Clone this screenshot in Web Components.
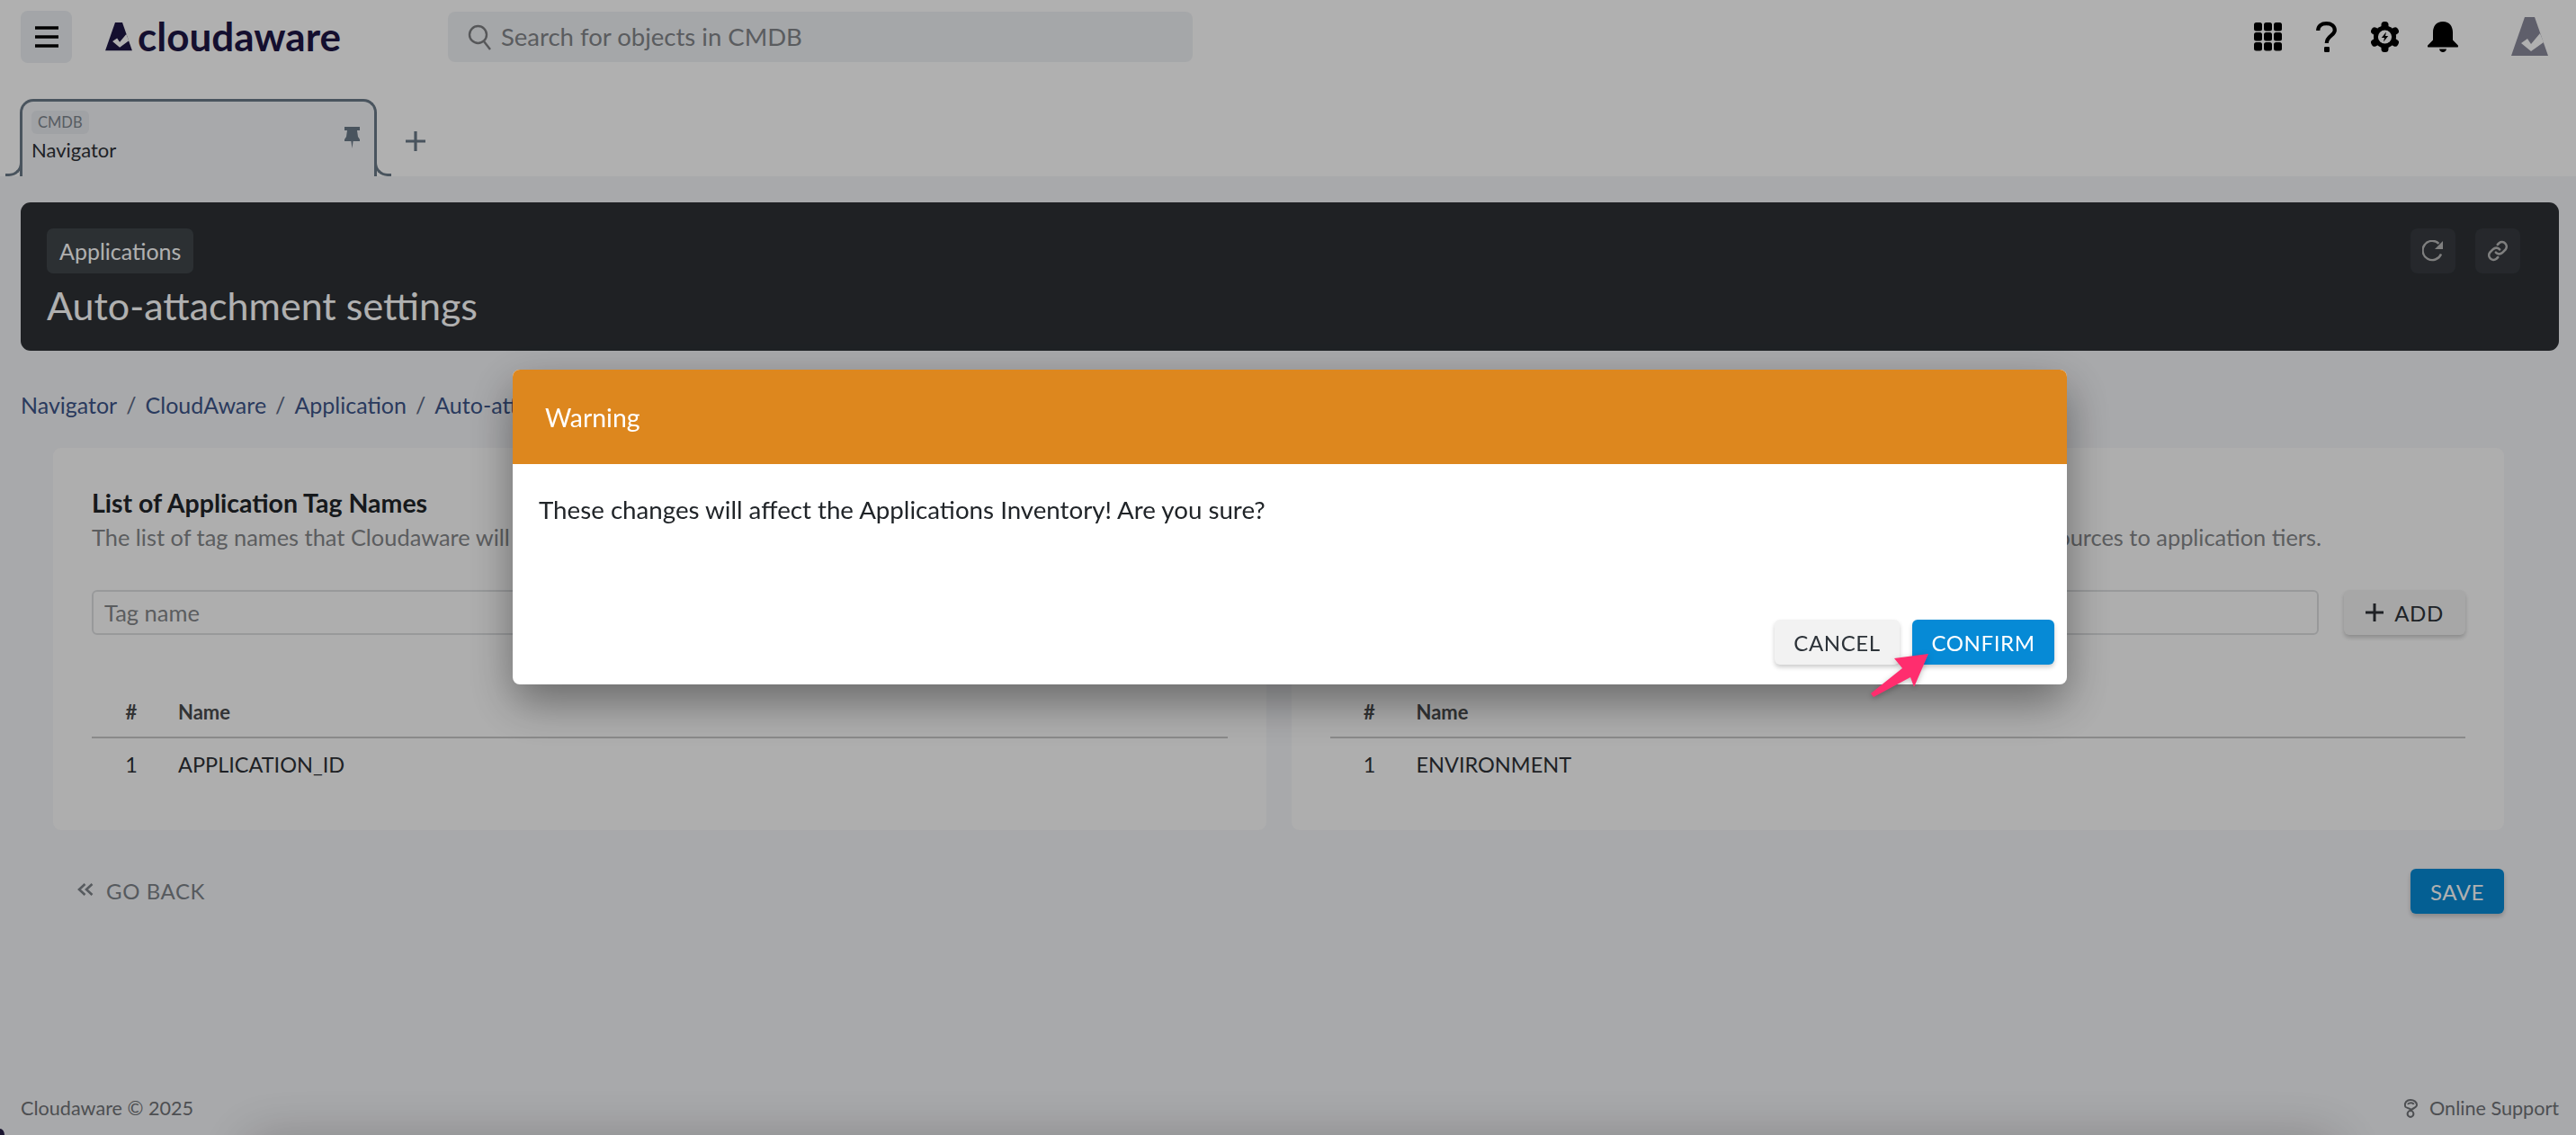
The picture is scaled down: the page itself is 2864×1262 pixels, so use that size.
<!DOCTYPE html>
<html lang="en">
<head>
<meta charset="utf-8">
<title>Cloudaware - Auto-attachment settings</title>
<style>
    html, body { margin: 0; height: 100%; overflow: hidden; }
    body { background: #f4f5f8; color: #212529; font-family: Lato, "Open Sans", sans-serif; font-size: 25px; }
    cw-app { height: 100vh; }
</style>
</head>
<body>

<template id="cw-logo-mark">
    <style>
        :host { display: inline-flex; }
        svg { display: block; width: 100%; height: 100%; }
    </style>
    <svg viewBox="0 0 41 44">
        <path fill="currentColor" d="M15 0H26L41 43H0Z"/>
        <path fill="var(--notch, #fff)" d="M11 29L18 24L22 30L32 18L36 28L22 38Z"/>
    </svg>
</template>

<template id="cw-topbar">
    <style>
        :host { display: flex; align-items: center; height: 58px; padding: 12px 31px 12px 23px; background: #fff; }
        .menu { width: 57px; height: 58px; border-radius: 8px; background: #ecEFf3; display: flex; align-items: center; justify-content: center; }
        .menu svg { width: 26px; height: 24px; }
        .brand { display: flex; align-items: center; gap: 6px; margin-left: 37px; width: 381px; color: #1d1744; }
        .brand cw-logo-mark { width: 30px; height: 32px; }
        .brand span { font-weight: 700; font-size: 44px; line-height: 56px; margin-bottom: 2px; }
        .search { width: 828px; height: 56px; border-radius: 8px; background: #f0f2f5; display: flex; align-items: center; box-sizing: border-box; padding-left: 22px; gap: 11px; color: #83868a; font-size: 27.5px; }
        .search svg { width: 26px; height: 30px; flex: none; }
        .search span { margin-bottom: 2px; }
        .icons { margin-left: auto; display: flex; align-items: center; color: #000; }
        .icons svg { display: block; }
        .avatar { width: 41px; height: 44px; margin-left: 59px; color: #8a8a9b; --notch: #fff; }
    </style>
    <div class="menu">
        <svg viewBox="0 0 26 24"><path d="M0 2H26M0 12H26M0 22H26" stroke="#000" stroke-width="3.6" fill="none"/></svg>
    </div>
    <div class="brand"><cw-logo-mark></cw-logo-mark><span>cloudaware</span></div>
    <div class="search">
        <svg viewBox="0 0 26 30" fill="none" stroke="#7d7f82" stroke-width="2.4"><circle cx="11.5" cy="12.5" r="9.5"/><path d="M18 20L25 29"/></svg>
        <span>Search for objects in CMDB</span>
    </div>
    <div class="icons">
        <svg width="31" height="32" viewBox="0 0 31 32" fill="currentColor" style="margin-right:38px">
            <rect x="0" y="0" width="9" height="9.5" rx="2.5"/><rect x="11" y="0" width="9" height="9.5" rx="2.5"/><rect x="22" y="0" width="9" height="9.5" rx="2.5"/>
            <rect x="0" y="11" width="9" height="9.5" rx="2.5"/><rect x="11" y="11" width="9" height="9.5" rx="2.5"/><rect x="22" y="11" width="9" height="9.5" rx="2.5"/>
            <rect x="0" y="22" width="9" height="9.5" rx="2.5"/><rect x="11" y="22" width="9" height="9.5" rx="2.5"/><rect x="22" y="22" width="9" height="9.5" rx="2.5"/>
        </svg>
        <svg width="23" height="34" viewBox="0 0 23 34" style="margin-right:38px">
            <path d="M2.2 10C2.2 5 6 2.2 11.5 2.2C17 2.2 20.8 5 20.8 9.8C20.8 15.5 11.8 15.5 11.8 24" fill="none" stroke="currentColor" stroke-width="4.2"/>
            <rect x="9" y="28" width="6" height="6" rx="1.2" fill="currentColor"/>
        </svg>
        <svg width="31" height="34" viewBox="0 0 31 34" style="margin-right:32px">
            <g fill="currentColor">
                <circle cx="15.5" cy="17" r="12.5"/>
                <rect x="11.5" y="0" width="8" height="34" rx="3.5"/>
                <rect x="11.5" y="0" width="8" height="34" rx="3.5" transform="rotate(60 15.5 17)"/>
                <rect x="11.5" y="0" width="8" height="34" rx="3.5" transform="rotate(120 15.5 17)"/>
            </g>
            <circle cx="15.5" cy="17" r="7.6" fill="#fff"/>
            <path d="M17 11.5L11.8 18H15L14 22.5L19.2 16H16Z" fill="currentColor"/>
        </svg>
        <svg width="34" height="34" viewBox="0 0 34 34" fill="currentColor">
            <path d="M17 0C9.5 0 6 5.5 6 12V20.5L1.6 25C.4 26.2 0 26.6 0 27.4C0 28.2.6 28.6 1.6 28.6H32.4C33.4 28.6 34 28.2 34 27.4C34 26.6 33.6 26.2 32.4 25L28 20.5V12C28 5.5 24.5 0 17 0Z"/>
            <path d="M13 30.5H21C20.6 32.8 19 34 17 34C15 34 13.4 32.8 13 30.5Z"/>
        </svg>
        <cw-logo-mark class="avatar"></cw-logo-mark>
    </div>
</template>

<template id="cw-tabs">
    <style>
        :host { display: flex; align-items: flex-start; height: 86px; padding: 28px 0 0 22px; background: #fff; }
        .tab { position: relative; box-sizing: border-box; width: 397px; height: 86px; padding: 10px 16px 0 10px; background: #f4f5f8; border: 3px solid #6b7a88; border-bottom: 0; border-radius: 15px 15px 0 0; }
        .tab::before, .tab::after { content: ""; position: absolute; bottom: 0; width: 16px; height: 14px; border-bottom: 3px solid #6b7a88; }
        .tab::before { left: -19px; border-right: 3px solid #6b7a88; border-bottom-right-radius: 15px; }
        .tab::after { right: -19px; border-left: 3px solid #6b7a88; border-bottom-left-radius: 15px; }
        .kind { display: block; width: max-content; padding: 0 7px; height: 26px; line-height: 26px; border-radius: 6px; background: #e8ebef; color: #7e868e; font-size: 16.5px; }
        .name { font-size: 22px; line-height: 28px; margin-top: 4px; color: #2d3136; }
        .pin { position: absolute; right: 16px; top: 28px; width: 17px; height: 24px; }
        .add { width: 22px; height: 22px; margin: 36px 0 0 32px; }
    </style>
    <div class="tab">
        <span class="kind"><slot name="kind"></slot></span>
        <div class="name"><slot></slot></div>
        <svg class="pin" viewBox="0 0 17 24" fill="#6b7a88"><path d="M0 0H17V4H14L15 11L17 14V16H9.6L8.5 24L7.4 16H0V14L2 11L3 4H0Z"/></svg>
    </div>
    <svg class="add" viewBox="0 0 22 22"><path d="M11 0V22M0 11H22" stroke="#6b7a88" stroke-width="3.2"/></svg>
</template>

<template id="cw-page-header">
    <style>
        :host { display: flex; justify-content: space-between; height: 165px; box-sizing: border-box; padding: 29px 43px 0 29px; border-radius: 11px; background: #2d3135; color: #fff; }
        .chip { display: inline-block; height: 50px; line-height: 50px; padding: 0 14px; border-radius: 7px; background: #40464b; font-size: 25px; font-variant-ligatures: common-ligatures discretionary-ligatures; }
        h1 { margin: 7px 0 0; font-size: 43px; line-height: 58px; font-weight: 400; }
        .tools { display: flex; gap: 22px; }
        .tool { width: 50px; height: 50px; border-radius: 8px; background: #373b40; display: flex; align-items: center; justify-content: center; }
        svg { display: block; }
    </style>
    <div>
        <span class="chip"><slot name="section"></slot></span>
        <h1><slot></slot></h1>
    </div>
    <div class="tools">
        <div class="tool">
            <svg width="24" height="24" viewBox="0 0 24 24" fill="none" stroke="#b9b9b9" stroke-width="2.4"><path d="M21 15.5A10.6 10.6 0 1 1 18.5 3.8"/><path d="M23 1V10H14Z" fill="#b9b9b9" stroke="none"/></svg>
        </div>
        <div class="tool">
            <svg width="26" height="26" viewBox="0 0 24 24" fill="none" stroke="#b9b9b9" stroke-width="2.4" stroke-linecap="round"><path d="M10 13.5a4.6 4.6 0 0 0 6.6.4l3.4-3.4a4.7 4.7 0 0 0-6.6-6.6l-1.6 1.6"/><path d="M14 10.5a4.6 4.6 0 0 0-6.6-.4L4 13.5a4.7 4.7 0 0 0 6.6 6.6l1.6-1.6"/></svg>
        </div>
    </div>
</template>

<template id="cw-breadcrumb">
    <style>
        :host { display: flex; gap: 10px; margin-top: 44px; line-height: 32px; font-size: 25px; color: #3d5589; white-space: nowrap; }
        i { font-style: normal; color: #5d6b86; }
        .lig { font-variant-ligatures: common-ligatures discretionary-ligatures; }
    </style>
    <span>Navigator</span><i>/</i><span>CloudAware</span><i>/</i><span class="lig">Application</span><i>/</i><span>Auto-attachment settings</span>
</template>

<template id="cw-tag-card">
    <style>
        :host { display: block; box-sizing: border-box; height: 425px; padding: 44px 43px 0; border-radius: 9px; background: #fdfdfd; }
        h3 { margin: 0; font-size: 28.5px; line-height: 34px; font-weight: 700; color: #212529; }
        p { margin: 6px 0 0; font-size: 25.4px; line-height: 30px; color: #85878a; white-space: nowrap; }
        .form { display: flex; gap: 28px; margin-top: 44px; }
        .field { flex: 1; height: 50px; box-sizing: border-box; padding-left: 12px; line-height: 46px; border: 2px solid #dcdee0; border-radius: 6px; color: #85878a; font-size: 25.5px; }
        cw-button { width: 135px; }
        .head, .row { display: grid; grid-template-columns: 88px 1fr; }
        .head { margin-top: 57px; height: 58px; line-height: 58px; font-size: 22px; font-weight: 700; color: #4a4c4e; border-bottom: 2px solid #c9c9c9; box-sizing: border-box; }
        .row { height: 58px; line-height: 58px; font-size: 23.5px; color: #2d3136; }
        .head span:first-child, .row span:first-child { text-align: center; }
        .head span + span, .row span + span { padding-left: 8px; }
    </style>
    <h3><slot name="title"></slot></h3>
    <p><slot name="hint"></slot></p>
    <div class="form">
        <div class="field">Tag name</div>
        <cw-button><svg slot="icon" width="20" height="20" viewBox="0 0 20 20"><path d="M10 0V20M0 10H20" stroke="#2d3136" stroke-width="3"/></svg>ADD</cw-button>
    </div>
    <div class="head"><span>#</span><span>Name</span></div>
    <div class="row"><span>1</span><span><slot name="tag"></slot></span></div>
</template>

<template id="cw-button">
    <style>
        :host { display: inline-flex; box-sizing: border-box; height: 50px; align-items: center; justify-content: center; gap: 12px; border-radius: 6px; background: #f2f2f2; color: #2d3339; font-size: 24px; letter-spacing: .6px; box-shadow: 0 3px 5px rgba(0,0,0,.2); }
        :host([primary]) { background: #068ad6; color: #fff; }
        :host([flat]) { background: none; box-shadow: none; color: #7d8389; gap: 14px; }
        ::slotted(svg) { display: block; flex: none; }
    </style>
    <slot name="icon"></slot><slot></slot>
</template>

<template id="cw-footer">
    <style>
        :host { display: flex; justify-content: space-between; align-items: center; margin-top: auto; padding: 0 19px 14px 23px; line-height: 32px; font-size: 21.6px; color: #707377; }
        .help { display: flex; align-items: center; gap: 13px; }
        svg { display: block; }
    </style>
    <span>Cloudaware © 2025</span>
    <span class="help">
        <svg width="16" height="21" viewBox="0 0 16 21" fill="none" stroke="currentColor" stroke-width="2"><path d="M2 8C1 4 4 1 8 1C12 1 15 3.5 15 6.5C15 9.5 11 10 9 12C6 9.5 2 10 2 8Z"/><path d="M5 6C6 3.5 11 3.5 11.5 6"/><circle cx="8" cy="16.5" r="3.4"/></svg>
        <span>Online Support</span>
    </span>
</template>

<template id="cw-dialog">
    <style>
        :host { position: fixed; inset: 0; display: block; background: rgba(0,0,0,.31); }
        .box { position: relative; display: flex; flex-direction: column; width: 1728px; height: 350px; margin: 411px 0 0 570px; border-radius: 8px; background: #fff; box-shadow: 0 20px 50px rgba(0,0,0,.4); }
        header { height: 105px; display: flex; align-items: center; padding-left: 36px; background: #dd871e; color: #fff; font-size: 28.4px; border-radius: 8px 8px 0 0; }
        .body { flex: 1; padding: 31px 29px 0; font-size: 27.7px; line-height: 40px; color: #212529; }
        footer { display: flex; justify-content: flex-end; gap: 14px; padding: 0 14px 22px; }
        .pointer { position: absolute; left: 1509px; top: 314px; width: 70px; height: 54px; overflow: visible; filter: drop-shadow(0 2px 3px rgba(0,0,0,.25)); }
        .ghost { position: fixed; left: 300px; right: 290px; top: 1290px; height: 100px; box-shadow: 0 0 60px 25px rgba(0,0,0,.22); }
        .corner { position: fixed; left: 0; bottom: 0; width: 5px; height: 7px; background: #1a1530; border-top-right-radius: 100%; }
        cw-button.cancel { width: 139px; }
        cw-button.confirm { width: 158px; }
    </style>
    <div class="box">
        <header><slot name="title"></slot></header>
        <div class="body"><slot></slot></div>
        <footer>
            <cw-button class="cancel">CANCEL</cw-button>
            <cw-button class="confirm" primary>CONFIRM</cw-button>
        </footer>
        <svg class="pointer" viewBox="0 0 70 54"><path fill="#ff2d6e" d="M65 2L27 7L36 18L1 46L4 50L45 28L49 39Z"/></svg>
    </div>
    <div class="ghost"></div>
    <div class="corner"></div>
</template>

<template id="cw-app">
    <style>
        :host { display: flex; flex-direction: column; }
        .page { padding: 29px 19px 0 23px; }
        .cards { display: grid; grid-template-columns: 1fr 1fr; gap: 28px; margin: 32px 61px 0 36px; }
        .actions { display: flex; justify-content: space-between; align-items: center; margin: 43px 61px 0 63px; }
        cw-button[primary] { width: 104px; }
        cw-button[flat] { margin-top: -2px; }
    </style>
    <cw-topbar></cw-topbar>
    <cw-tabs><span slot="kind">CMDB</span>Navigator</cw-tabs>
    <div class="page">
        <cw-page-header><span slot="section">Applications</span>Auto-attachment settings</cw-page-header>
        <cw-breadcrumb></cw-breadcrumb>
        <div class="cards">
            <cw-tag-card>
                <span slot="title">List of Application Tag Names</span>
                <span slot="hint">The list of tag names that Cloudaware will use to attach resources to applications.</span>
                <span slot="tag">APPLICATION_ID</span>
            </cw-tag-card>
            <cw-tag-card>
                <span slot="title">List of Environment Tag Names</span>
                <span slot="hint">The list of tag names that Cloudaware will use to automatically assign resources to application tiers.</span>
                <span slot="tag">ENVIRONMENT</span>
            </cw-tag-card>
        </div>
        <div class="actions">
            <cw-button flat>
                <svg slot="icon" width="18" height="16" viewBox="0 0 18 16" fill="none" stroke="#7d8389" stroke-width="2.6"><path d="M8.5 1L2 7L8.5 13M16.5 1L10 7L16.5 13"/></svg>
                GO BACK
            </cw-button>
            <cw-button primary>SAVE</cw-button>
        </div>
    </div>
    <cw-footer></cw-footer>
    <cw-dialog>
        <span slot="title">Warning</span>
        These changes will affect the Applications Inventory! Are you sure?
    </cw-dialog>
</template>

<cw-app></cw-app>

<script>
    // every element clones the template with its own tag name
    class TemplateElement extends HTMLElement {
        constructor() {
            super();
            this.attachShadow({ mode: "open" });
            const template = document.getElementById(this.localName).content;
            this.shadowRoot.appendChild(template.cloneNode(true));
        }
    }

    const names = [
        'cw-logo-mark', 'cw-button', 'cw-topbar', 'cw-tabs', 'cw-page-header', 'cw-breadcrumb',
        'cw-tag-card', 'cw-footer', 'cw-dialog', 'cw-app'
    ];
    names.forEach(name => customElements.define(name, class extends TemplateElement {}));
</script>
</body>
</html>
